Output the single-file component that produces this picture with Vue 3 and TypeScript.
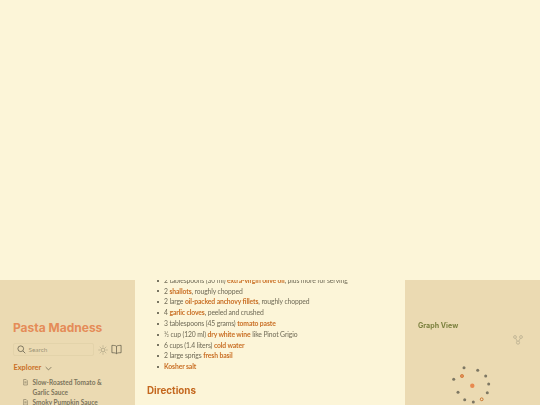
<script setup lang="ts">
interface Part { text: string; strong?: boolean }
const ingredients: Part[][] = [
  [{ text: '2 tablespoons (30 ml) ' }, { text: 'extra-virgin olive oil', strong: true }, { text: ', plus more for serving' }],
  [{ text: '2 ' }, { text: 'shallots', strong: true }, { text: ', roughly chopped' }],
  [{ text: '2 large ' }, { text: 'oil-packed anchovy fillets', strong: true }, { text: ', roughly chopped' }],
  [{ text: '4 ' }, { text: 'garlic cloves', strong: true }, { text: ', peeled and crushed' }],
  [{ text: '3 tablespoons (45 grams) ' }, { text: 'tomato paste', strong: true }],
  [{ text: '½ cup (120 ml) ' }, { text: 'dry white wine', strong: true }, { text: ' like Pinot Grigio' }],
  [{ text: '6 cups (1.4 liters) ' }, { text: 'cold water', strong: true }],
  [{ text: '2 large sprigs ' }, { text: 'fresh basil', strong: true }],
  [{ text: 'Kosher salt', strong: true }]
]
const recipes = ['Slow-Roasted Tomato & Garlic Sauce', 'Smoky Pumpkin Sauce']
const grayDots = [
  [59, 22.7], [72.7, 25.3], [80.7, 31], [83.7, 39], [82.3, 47.7],
  [68.3, 57], [59.7, 54.7], [53, 47.3], [48.7, 34.3]
]
</script>

<template>
  <div class="page">
    <div class="top"></div>
    <div class="row">
      <aside class="left">
        <h1 class="title">Pasta Madness</h1>
        <div class="tools">
          <div class="search">
            <svg class="search-icon" viewBox="0 0 12 12" width="9" height="9">
              <circle cx="5" cy="5" r="3.8" fill="none" stroke="#5f5a48" stroke-width="1" />
              <path d="M7.8 7.8 11 11" stroke="#5f5a48" stroke-width="1" />
            </svg>
            <span>Search</span>
          </div>
          <svg class="sun" viewBox="0 0 12 12" width="10" height="10">
            <circle cx="6" cy="6" r="2.3" fill="none" stroke="#8f8a70" stroke-width=".7" />
            <path d="M6 .6v1.4M6 10v1.4M.6 6H2M10 6h1.4M2.2 2.2l1 1M8.8 8.8l1 1M2.2 9.8l1-1M8.8 3.2l1-1" stroke="#8f8a70" stroke-width=".7" />
          </svg>
          <svg class="book" viewBox="0 0 12 12" width="11" height="11">
            <path d="M6 2.5C5 1.6 3 1.5 1 1.5v8c2 0 4 .1 5 1 1-.9 3-1 5-1v-8c-2 0-4 .1-5 1Zm0 0v8" fill="none" stroke="#5f5a48" stroke-width=".8" />
          </svg>
        </div>
        <div class="explorer">
          <span>Explorer</span>
          <svg viewBox="0 0 10 6" width="7" height="5">
            <path d="M1 1l4 4 4-4" fill="none" stroke="#5f5a48" stroke-width="1" />
          </svg>
        </div>
        <ul class="files">
          <li v-for="name in recipes" :key="name">
            <svg viewBox="0 0 8 10" width="5" height="6.5">
              <path d="M1 .6h4l2 2v6.8H1ZM2.4 4.4h3.2M2.4 6h3.2" fill="none" stroke="#6c6650" stroke-width=".8" />
            </svg>
            <span>{{ name }}</span>
          </li>
        </ul>
      </aside>

      <main class="center">
        <ul class="ingredients">
          <li v-for="(line, i) in ingredients" :key="i">
            <template v-for="(part, j) in line" :key="j">
              <strong v-if="part.strong">{{ part.text }}</strong>
              <template v-else>{{ part.text }}</template>
            </template>
          </li>
        </ul>
        <h2 class="directions">Directions</h2>
      </main>

      <aside class="right">
        <h3 class="graph-title">Graph View</h3>
        <div class="graph">
          <svg class="graph-icon" viewBox="0 0 10 10" width="10" height="10">
            <g fill="none" stroke="#b3a98c" stroke-width=".7">
              <circle cx="2" cy="2" r="1.4" />
              <circle cx="8" cy="2" r="1.4" />
              <circle cx="5" cy="7.6" r="1.6" />
              <path d="M2.7 3.3 4.2 6.2M7.3 3.3 5.8 6.2" />
            </g>
          </svg>
          <svg class="dots" viewBox="0 0 135 60" width="135" height="60">
            <circle v-for="(d, i) in grayDots" :key="i" :cx="d[0]" :cy="d[1]" r="1.5" fill="#7d7763" />
            <circle cx="57" cy="31" r="1.6" fill="#e58e5a" stroke="#c4681f" stroke-width=".6" />
            <circle cx="67.3" cy="40.7" r="2.2" fill="#e8894f" />
            <circle cx="76.7" cy="54.3" r="1.4" fill="#f3e3bd" stroke="#c4681f" stroke-width=".9" />
          </svg>
        </div>
      </aside>
    </div>
  </div>
</template>

<style>
html, body { margin: 0; padding: 0; background: #fcf5d8; }
</style>

<style scoped>
.page {
  width: 540px;
  height: 405px;
  overflow: hidden;
  background: #fcf5d8;
  font-family: Lato, sans-serif;
  display: flex;
  flex-direction: column;
}
.top { height: 280px; flex: none; }
.row { display: flex; height: 125px; flex: none; filter: blur(.25px); }
.left {
  width: 135px;
  flex: none;
  background: #ebdab2;
  padding: 40px 0 0 13px;
  box-sizing: border-box;
  overflow: hidden;
}
.title {
  margin: 0;
  font: 700 12px/16px Inter, sans-serif;
  color: #e58c58;
}
.tools { display: flex; align-items: center; margin-top: 7px; }
.search {
  width: 81px;
  height: 13px;
  box-sizing: border-box;
  border: 1px solid #e3d3aa;
  border-radius: 2px;
  display: flex;
  align-items: center;
  gap: 2.5px;
  padding-left: 3px;
  font-size: 6.4px;
  color: #9c9578;
}
.sun { margin-left: 4px; }
.book { margin-left: 3px; }
.explorer {
  display: flex;
  align-items: center;
  gap: 4px;
  margin-top: 6px;
  padding-left: .5px;
  font-size: 7.4px;
  line-height: 12px;
  font-weight: 700;
  color: #c96f25;
}
.files { list-style: none; margin: 3.5px 0 0; padding: 0 0 0 10px; }
.files li {
  display: flex;
  gap: 4.5px;
  width: 84px;
  font-size: 6.5px;
  font-weight: 700;
  line-height: 10px;
  color: #7c745c;
}
.files svg { flex: none; margin-top: 1.5px; }
.center { width: 270px; flex: none; padding-left: 12px; box-sizing: border-box; overflow: hidden; }
.ingredients {
  list-style: none;
  margin: -5.2px 0 0;
  padding: 0 0 0 17px;
  font-size: 6.8px;
  letter-spacing: -.12px;
  line-height: 10.8px;
  color: #6f6a56;
}
.ingredients li { white-space: nowrap; }
.ingredients li::before {
  content: "";
  display: inline-block;
  width: 2px;
  height: 2px;
  border-radius: 50%;
  background: #4d4a3a;
  margin: 0 5px 1px -7px;
  vertical-align: middle;
}
.ingredients strong { color: #c96f25; font-weight: 700; }
.directions {
  margin: 11.7px 0 0;
  font: 700 9.8px/14px Inter, sans-serif;
  color: #c4681f;
}
.right {
  width: 135px;
  flex: none;
  background: #ebdab2;
  padding: 39.5px 0 0 13px;
  box-sizing: border-box;
  overflow: hidden;
}
.graph-title {
  margin: 0;
  font: 700 7.1px/11px Inter, sans-serif;
  color: #7d8240;
}
.graph { margin: 0 0 0 -13px; display: flex; flex-direction: column; }
.graph-icon { margin: 4.5px 0 0 108px; }
.dots { display: block; }
</style>
